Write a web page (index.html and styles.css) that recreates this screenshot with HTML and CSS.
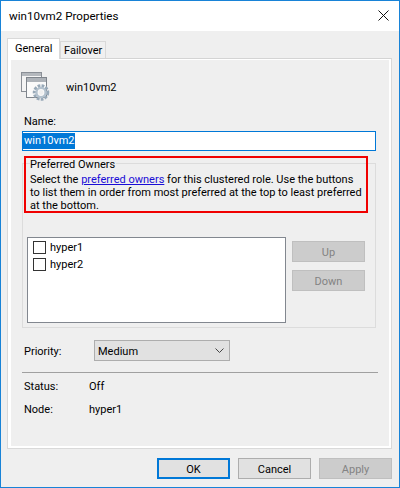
FILE: index.html
```html
<!DOCTYPE html>
<html lang="en">
<head>
    <meta charset="UTF-8">
    <title>win10vm2 Properties</title>
    <link rel="stylesheet" href="styles.css">
</head>
<body>
    <div class="window">
        <div class="titlebar">
            <span class="title">win10vm2 Properties</span>
            <svg class="close" width="11" height="11" viewBox="0 0 11 11">
                <path d="M0.5 0.5L10.5 10.5M10.5 0.5L0.5 10.5" stroke="#111" stroke-width="1" fill="none"/>
            </svg>
        </div>
        <div class="content">
            <div class="tabs">
                <div class="tab active">General</div>
                <div class="tab">Failover</div>
            </div>
            <div class="panel">
                <div class="panel-inner">
                    <div class="header">
                        <svg class="role-icon" width="30" height="30" viewBox="0 0 30 30">
                            <rect x="1.5" y="1.5" width="20" height="19" fill="#f4f4f4" stroke="#8a8f96"/>
                            <rect x="2" y="2" width="19" height="3" fill="#b4b8bd"/>
                            <rect x="6.5" y="6.5" width="20" height="20" fill="#fafafa" stroke="#7f858c"/>
                            <rect x="7" y="7" width="19" height="4" fill="#aeb3b9"/>
                            <circle cx="21" cy="21.5" r="6.5" fill="none" stroke="#98a9b8" stroke-width="3.5" stroke-dasharray="2.6 1.2"/>
                            <circle cx="21" cy="21.5" r="4.6" fill="none" stroke="#b4c2ce" stroke-width="2.4"/>
                            <circle cx="21" cy="21.5" r="2.4" fill="#f0f0f0"/>
                        </svg>
                        <span class="role-name">win10vm2</span>
                    </div>
                    <label class="name-label">Name:</label>
                    <div class="name-input"><span class="selected">win10vm2</span></div>
                    <fieldset class="owners">
                        <legend>Preferred Owners</legend>
                        <p class="owners-text">Select the <a href="#">preferred owners</a> for this clustered role. Use the buttons to list them in order from most preferred at the top to least preferred at the bottom.</p>
                        <div class="owners-row">
                            <div class="list">
                                <div class="list-item"><span class="check"></span>hyper1</div>
                                <div class="list-item"><span class="check"></span>hyper2</div>
                            </div>
                            <div class="order-buttons">
                                <div class="btn disabled">Up</div>
                                <div class="btn disabled">Down</div>
                            </div>
                        </div>
                    </fieldset>
                    <div class="priority">
                        <span class="priority-label">Priority:</span>
                        <div class="select">
                            <span class="select-value">Medium</span>
                            <svg width="9" height="5" viewBox="0 0 9 5">
                                <path d="M0.5 0.5L4.5 4.5L8.5 0.5" stroke="#444" fill="none"/>
                            </svg>
                        </div>
                    </div>
                    <div class="divider"></div>
                    <div class="info-row"><span class="info-label">Status:</span><span>Off</span></div>
                    <div class="info-row"><span class="info-label">Node:</span><span>hyper1</span></div>
                </div>
            </div>
            <div class="footer">
                <div class="btn default">OK</div>
                <div class="btn">Cancel</div>
                <div class="btn disabled">Apply</div>
            </div>
        </div>
        <div class="highlight"></div>
    </div>
</body>
</html>
```

FILE: styles.css
```css
html, body {
    margin: 0;
    padding: 0;
}
body {
    font-family: Roboto, "Liberation Sans", sans-serif;
    font-size: 11px;
    color: #000;
    background-color: #f0f0f0;
}
.window {
    position: relative;
    box-sizing: border-box;
    width: 400px;
    height: 488px;
    border: 1px solid #1883d7;
    display: flex;
    flex-direction: column;
    overflow: hidden;
}
.titlebar {
    height: 30px;
    background-color: #fff;
    display: flex;
    align-items: center;
    justify-content: space-between;
    padding: 0 10px 0 8px;
    flex-shrink: 0;
}
.title {
    font-size: 11.6px;
}
.close {
    margin-bottom: 1px;
}
.content {
    flex: 1;
    display: flex;
    flex-direction: column;
    background-color: #efefef;
    padding: 7px 7px 0 6px;
}
.tabs {
    display: flex;
    height: 20px;
    position: relative;
    z-index: 1;
    align-items: flex-end;
}
.tab {
    box-sizing: border-box;
    height: 17px;
    width: 46px;
    padding: 1px 0 0 3px;
    background-color: #f0f0f0;
    border: 1px solid #d9d9d9;
    border-bottom: none;
    line-height: 15px;
}
.tab.active {
    height: 21px;
    width: 53px;
    background-color: #fff;
    margin-bottom: -1px;
    padding: 2px 0 0 7px;
    line-height: 16px;
}
.panel {
    box-sizing: border-box;
    height: 391px;
    border: 1px solid #d9d9d9;
    border-top-color: #d4d4d4;
}
.panel-inner {
    box-sizing: border-box;
    height: 100%;
    border: solid #fff;
    border-width: 1px 2px 2px 3px;
    padding: 0 11px 0 11px;
}
.header {
    display: flex;
    align-items: center;
    height: 30px;
    margin-top: 11px;
}
.role-icon {
    margin-left: -2px;
    margin-right: 16px;
}
.role-name {
    padding-top: 2px;
}
.name-label {
    display: block;
    margin: 13px 0 0 2px;
    line-height: 16px;
}
.name-input {
    box-sizing: border-box;
    width: 354px;
    height: 20px;
    margin-top: 1px;
    background-color: #fff;
    border: 1px solid #0078d7;
    padding: 1px 0 0 0;
    line-height: 16px;
}
.selected {
    display: inline-block;
    background-color: #0078d7;
    color: #fff;
    padding: 0 0 0 1px;
}
.owners {
    box-sizing: border-box;
    margin: 3px 0 0 0;
    height: 174px;
    width: 354px;
    padding: 0 4px 0 4px;
    border: 1px solid #dcdcdc;
}
.owners legend {
    padding: 4px 1px 0 0;
    margin-left: 3px;
    line-height: 14px;
}
.owners-text {
    margin: 1px 0 0 3px;
    line-height: 13px;
    width: 332px;
}
.owners-text a {
    color: #1a0dd6;
}
.owners-row {
    display: flex;
    margin-top: 25px;
}
.list {
    box-sizing: border-box;
    width: 259px;
    height: 86px;
    background-color: #fff;
    border: 1px solid #82878f;
    padding: 1px 5px;
}
.list-item {
    display: flex;
    align-items: center;
    height: 17px;
}
.check {
    box-sizing: border-box;
    width: 13px;
    height: 13px;
    border: 1px solid #333;
    margin-right: 4px;
}
.order-buttons {
    margin: 4px 0 0 6px;
    display: flex;
    flex-direction: column;
    gap: 8px;
}
.btn {
    box-sizing: border-box;
    width: 73px;
    height: 21px;
    background-color: #e1e1e1;
    border: 1px solid #adadad;
    text-align: center;
    line-height: 21px;
}
.btn.disabled {
    background-color: #cccccc;
    border-color: #bfbfbf;
    color: #838383;
}
.btn.default {
    border: 2px solid #0078d7;
    line-height: 19px;
}
.priority {
    display: flex;
    align-items: center;
    margin-top: 12px;
}
.priority-label {
    width: 70px;
    margin-left: 2px;
    padding-top: 2px;
}
.select {
    box-sizing: border-box;
    width: 136px;
    height: 21px;
    background-color: #e1e1e1;
    border: 1px solid #adadad;
    display: flex;
    align-items: center;
    justify-content: space-between;
    padding: 0 5px 0 3px;
}
.select-value {
    padding-top: 2px;
}
.divider {
    height: 1px;
    width: 356px;
    background-color: #a0a0a0;
    margin: 11px 0 0 0;
}
.divider + .info-row {
    margin-top: 1px;
}
.info-row {
    display: flex;
    height: 23px;
    line-height: 25px;
    margin-left: 2px;
}
.info-label {
    width: 65px;
}
.footer {
    display: flex;
    justify-content: flex-end;
    gap: 8px;
    margin-top: 9px;
}
.highlight {
    position: absolute;
    box-sizing: border-box;
    left: 23px;
    top: 155px;
    width: 344px;
    height: 57px;
    border: 2px solid #f00000;
}
```
